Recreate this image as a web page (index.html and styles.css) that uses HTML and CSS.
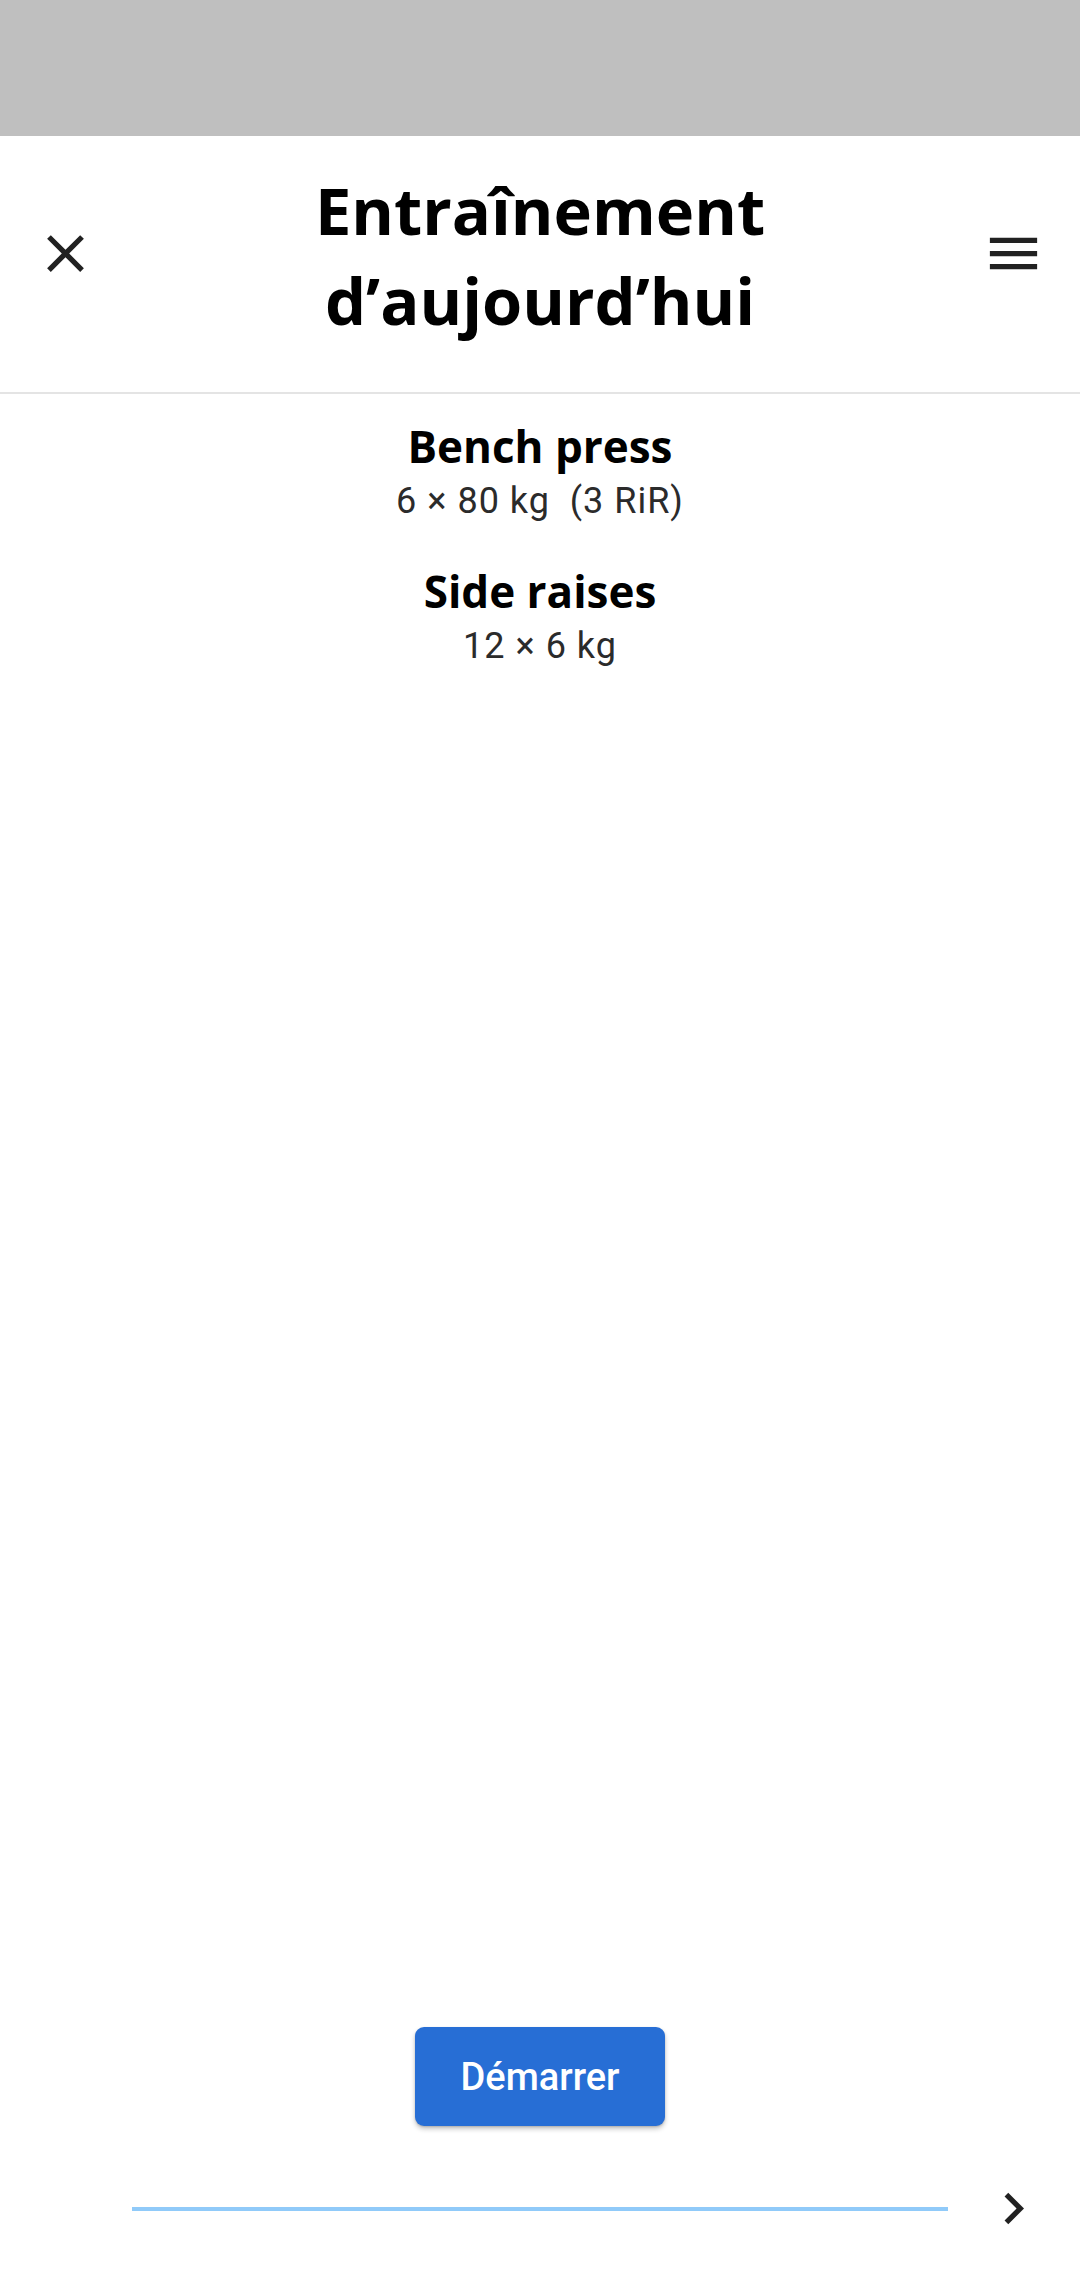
FILE: index.html
```html
<!DOCTYPE html>
<html lang="fr">
<head>
<meta charset="utf-8">
<title>Entraînement d’aujourd’hui</title>
<link rel="stylesheet" href="styles.css">
</head>
<body>
<div class="screen">
  <div class="status-bar"></div>
  <header class="app-bar">
    <button class="icon-btn close-btn" aria-label="Fermer">
      <svg viewBox="0 0 24 24" width="63" height="63"><path d="M19 6.41 17.59 5 12 10.59 6.41 5 5 6.41 10.59 12 5 17.59 6.41 19 12 13.41 17.59 19 19 17.59 13.41 12z"/></svg>
    </button>
    <h1 class="title">Entraînement d’aujourd’hui</h1>
    <button class="icon-btn menu-btn" aria-label="Menu">
      <svg viewBox="0 0 24 24" width="63" height="63"><path d="M3 18h18v-2H3v2zm0-5h18v-2H3v2zm0-7v2h18V6H3z"/></svg>
    </button>
  </header>
  <main class="content">
    <section class="exercise">
      <div class="ex-name">Bench press</div>
      <div class="ex-detail">6 × 80 kg&nbsp; (3 RiR)</div>
    </section>
    <section class="exercise">
      <div class="ex-name">Side raises</div>
      <div class="ex-detail">12 × 6 kg</div>
    </section>
  </main>
  <footer class="footer">
    <button class="start-btn">Démarrer</button>
    <div class="progress-row">
      <div class="progress-line"></div>
      <button class="icon-btn next-btn" aria-label="Suivant">
        <svg viewBox="0 0 24 24" width="63" height="63"><path d="M10 6 8.59 7.41 13.17 12l-4.58 4.59L10 18l6-6z"/></svg>
      </button>
    </div>
  </footer>
</div>
</body>
</html>
```
FILE: styles.css
```css
* { box-sizing: border-box; }

html, body {
  margin: 0;
  padding: 0;
  background: #ffffff;
}

.screen {
  width: 1080px;
  height: 2274px;
  display: flex;
  flex-direction: column;
  overflow: hidden;
}

.status-bar {
  height: 136px;
  background: #bfbfbf;
  flex: none;
}

.app-bar {
  flex: none;
  display: grid;
  grid-template-columns: 132px 1fr 132px;
  align-items: center;
  padding: 29px 0 47px;
  border-bottom: 2px solid #e4e4e4;
}

.icon-btn {
  background: none;
  border: none;
  padding: 0;
  margin: 0;
  width: 63px;
  height: 63px;
  display: flex;
  align-items: center;
  justify-content: center;
  cursor: pointer;
}

.icon-btn svg {
  display: block;
  fill: #212121;
}

.close-btn {
  justify-self: start;
  margin-left: 34px;
  margin-bottom: 3px;
}

.menu-btn {
  justify-self: end;
  margin-right: 35px;
  margin-bottom: 3px;
}

.title {
  margin: 0;
  text-align: center;
  font-family: "Open Sans", "Noto Sans", sans-serif;
  font-weight: 700;
  font-size: 65px;
  line-height: 90px;
  color: #000;
}

.content {
  flex: 1;
  display: flex;
  flex-direction: column;
  align-items: center;
  gap: 35px;
  padding-top: 27px;
}

.exercise {
  display: flex;
  flex-direction: column;
  align-items: center;
  text-align: center;
}

.ex-name {
  font-family: "Open Sans", "Noto Sans", sans-serif;
  font-weight: 700;
  font-size: 44px;
  line-height: 50px;
  color: #000;
}

.ex-detail {
  font-family: Roboto, "Liberation Sans", sans-serif;
  font-weight: 400;
  font-size: 36px;
  line-height: 60px;
  letter-spacing: 1px;
  color: #2b2b2b;
}

.footer {
  flex: none;
  display: flex;
  flex-direction: column;
  align-items: center;
  padding-bottom: 34px;
}

.start-btn {
  width: 250px;
  height: 99px;
  border: none;
  border-radius: 9px;
  background: #276ed5;
  color: #ffffff;
  font-family: Roboto, "Liberation Sans", sans-serif;
  font-weight: 500;
  font-size: 38px;
  box-shadow: 0 3px 5px rgba(0, 0, 0, 0.22), 0 1px 2px rgba(0, 0, 0, 0.15);
  margin-bottom: 51px;
  cursor: pointer;
}

.progress-row {
  width: 100%;
  height: 63px;
  display: flex;
  align-items: center;
  padding: 0 35px 0 132px;
}

.progress-line {
  flex: 1;
  height: 4px;
  background: #90caf9;
}

.next-btn {
  margin-left: 34px;
}
```
